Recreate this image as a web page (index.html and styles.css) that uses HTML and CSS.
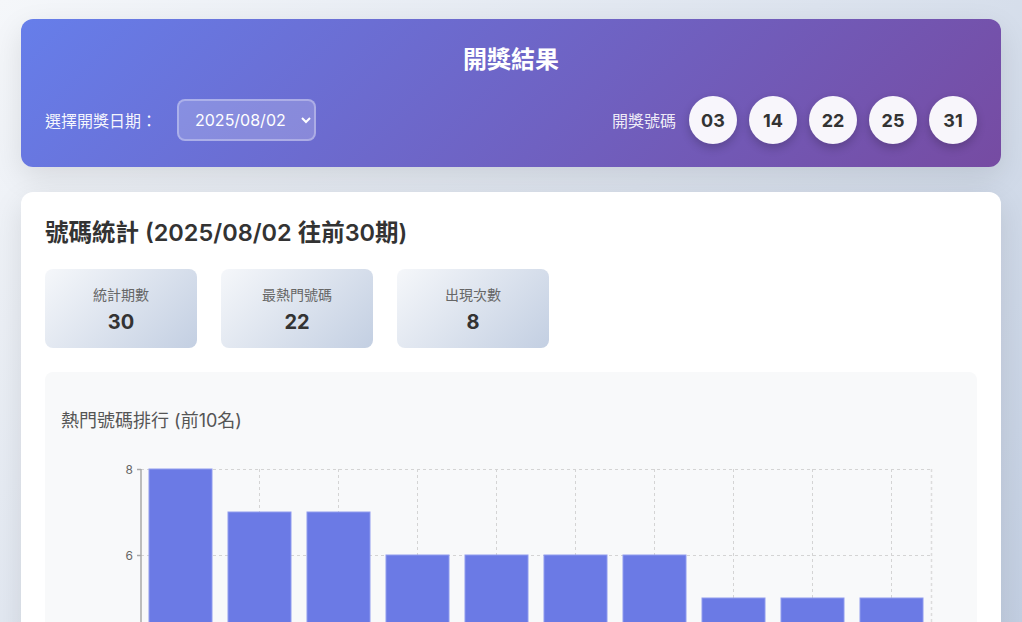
FILE: index.html
```html
<!DOCTYPE html>
<html lang="zh-Hant">
<head>
<meta charset="utf-8">
<title>開獎結果</title>
<link rel="stylesheet" href="styles.css">
</head>
<body>
<div class="container">
  <section class="header-card">
    <h1 class="header-title">開獎結果</h1>
    <div class="header-row">
      <div class="date-picker">
        <label class="date-label" for="draw-date">選擇開獎日期：</label>
        <select id="draw-date" class="date-select">
          <option>2025/08/02</option>
        </select>
      </div>
      <div class="numbers">
        <span class="numbers-label">開獎號碼</span>
        <span class="ball">03</span>
        <span class="ball">14</span>
        <span class="ball">22</span>
        <span class="ball">25</span>
        <span class="ball">31</span>
      </div>
    </div>
  </section>

  <section class="stats-card">
    <h2 class="stats-title">號碼統計 (2025/08/02 往前30期)</h2>
    <div class="stat-boxes">
      <div class="stat-box"><div class="stat-label">統計期數</div><div class="stat-value">30</div></div>
      <div class="stat-box"><div class="stat-label">最熱門號碼</div><div class="stat-value">22</div></div>
      <div class="stat-box"><div class="stat-label">出現次數</div><div class="stat-value">8</div></div>
    </div>
    <div class="chart-box">
      <div class="chart-title">熱門號碼排行 (前10名)</div>
      <svg class="chart" width="899" height="420" viewBox="0 0 899 420">
        <g class="grid">
          <line x1="80" y1="36.5" x2="870" y2="36.5"/>
          <line x1="80" y1="122.5" x2="870" y2="122.5"/>
          <line x1="80" y1="208.5" x2="870" y2="208.5"/>
          <line x1="80" y1="294.5" x2="870" y2="294.5"/>
          <line x1="119.5" y1="36" x2="119.5" y2="380"/>
          <line x1="198.5" y1="36" x2="198.5" y2="380"/>
          <line x1="277.5" y1="36" x2="277.5" y2="380"/>
          <line x1="356.5" y1="36" x2="356.5" y2="380"/>
          <line x1="435.5" y1="36" x2="435.5" y2="380"/>
          <line x1="514.5" y1="36" x2="514.5" y2="380"/>
          <line x1="593.5" y1="36" x2="593.5" y2="380"/>
          <line x1="672.5" y1="36" x2="672.5" y2="380"/>
          <line x1="751.5" y1="36" x2="751.5" y2="380"/>
          <line x1="830.5" y1="36" x2="830.5" y2="380"/>
          <line class="edge" x1="870.5" y1="36" x2="870.5" y2="380"/>
        </g>
        <g class="bars">
          <rect x="88" y="36" width="63" height="344"/>
          <rect x="167" y="79" width="63" height="301"/>
          <rect x="246" y="79" width="63" height="301"/>
          <rect x="325" y="122" width="63" height="258"/>
          <rect x="404" y="122" width="63" height="258"/>
          <rect x="483" y="122" width="63" height="258"/>
          <rect x="562" y="122" width="63" height="258"/>
          <rect x="641" y="165" width="63" height="215"/>
          <rect x="720" y="165" width="63" height="215"/>
          <rect x="799" y="165" width="63" height="215"/>
        </g>
        <g class="axis">
          <line x1="80" y1="36" x2="80" y2="380"/>
          <line x1="76" y1="36.5" x2="80" y2="36.5"/>
          <line x1="76" y1="122.5" x2="80" y2="122.5"/>
          <line x1="76" y1="208.5" x2="80" y2="208.5"/>
          <line x1="76" y1="294.5" x2="80" y2="294.5"/>
        </g>
        <g class="ticks">
          <text x="72" y="40.5">8</text>
          <text x="72" y="126.5">6</text>
          <text x="72" y="212.5">4</text>
          <text x="72" y="298.5">2</text>
        </g>
      </svg>
    </div>
  </section>
</div>
</body>
</html>
```

FILE: styles.css
```css
* { box-sizing: border-box; }

html, body { margin: 0; }

body {
  min-height: 100vh;
  padding: 19px 21px;
  font-family: "Inter", "Noto Sans CJK TC", sans-serif;
  color: #333;
  background: linear-gradient(135deg, #f5f7fa 0%, #c3cfe2 100%);
  background-attachment: fixed;
}

.container {
  display: flex;
  flex-direction: column;
  gap: 25px;
}

.header-card {
  border-radius: 12px;
  padding: 24px 24px 23px;
  color: #fff;
  background: linear-gradient(135deg, #667eea 0%, #764ba2 100%);
  box-shadow: 0 10px 30px rgba(0, 0, 0, 0.1);
}

.header-title {
  margin: 0 0 19px;
  text-align: center;
  font-size: 24px;
  line-height: 34px;
  font-weight: 700;
}

.header-row {
  display: flex;
  align-items: center;
  justify-content: space-between;
  height: 48px;
}

.date-picker {
  display: flex;
  align-items: center;
  gap: 20px;
}

.date-label {
  font-size: 16px;
  color: rgba(255, 255, 255, 0.95);
}

.date-select {
  width: 139px;
  height: 42px;
  padding: 0 8px 0 12px;
  font-family: "Inter", sans-serif;
  font-size: 16px;
  color: #fff;
  background: rgba(255, 255, 255, 0.2);
  border: 2px solid rgba(255, 255, 255, 0.3);
  border-radius: 8px;
}

.date-select option { color: #333; }

.numbers {
  display: flex;
  align-items: center;
  gap: 12px;
}

.numbers-label {
  font-size: 16px;
  color: rgba(255, 255, 255, 0.9);
  margin-right: 1px;
}

.ball {
  width: 48px;
  height: 48px;
  border-radius: 50%;
  display: flex;
  align-items: center;
  justify-content: center;
  background: rgba(255, 255, 255, 0.95);
  color: #333;
  font-size: 18px;
  font-weight: 700;
  box-shadow: 0 4px 10px rgba(0, 0, 0, 0.2);
}

.stats-card {
  background: #fff;
  border-radius: 12px;
  padding: 24px 24px 40px;
  box-shadow: 0 10px 30px rgba(0, 0, 0, 0.1);
}

.stats-title {
  margin: 0 0 19px;
  font-size: 23.5px;
  line-height: 34px;
  font-weight: 600;
  color: #333;
}

.stat-boxes {
  display: flex;
  gap: 24px;
  margin-bottom: 24px;
}

.stat-box {
  width: 152px;
  height: 79px;
  padding-top: 4px;
  border-radius: 8px;
  display: flex;
  flex-direction: column;
  align-items: center;
  justify-content: center;
  gap: 5px;
  background: linear-gradient(135deg, #f5f7fa 0%, #c3cfe2 100%);
}

.stat-label {
  font-size: 14px;
  line-height: 18px;
  color: #666;
}

.stat-value {
  font-size: 20px;
  line-height: 26px;
  font-weight: 700;
  color: #333;
}

.chart-box {
  background: #f8f9fa;
  border-radius: 8px;
  padding: 37px 16px 20px;
}

.chart-title {
  font-size: 18px;
  line-height: 24px;
  color: #555;
}

.chart {
  display: block;
}

.grid line {
  stroke: #d4d4d4;
  stroke-width: 1;
  stroke-dasharray: 3 3;
}

.grid .edge { stroke-width: 1.5; stroke: #dcdcdc; }

.bars rect {
  fill: #6b7ae5;
  stroke: #8f9bee;
  stroke-width: 1;
}

.axis line {
  stroke: #a8a8a8;
  stroke-width: 1.5;
}

.ticks text {
  font-family: "Inter", sans-serif;
  font-size: 12px;
  fill: #666;
  text-anchor: end;
}
```
